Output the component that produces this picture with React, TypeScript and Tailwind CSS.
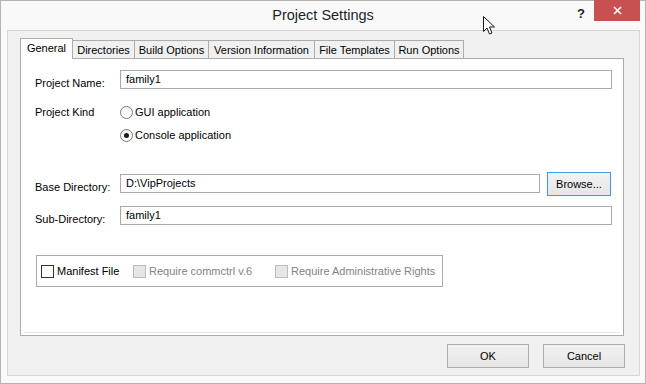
import React from 'react';

type Tab = { label: string; w: string };

const tabs: Tab[] = [
  { label: 'General', w: 'w-[53px]' },
  { label: 'Directories', w: 'w-[63px]' },
  { label: 'Build Options', w: 'w-[75px]' },
  { label: 'Version Information', w: 'w-[107px]' },
  { label: 'File Templates', w: 'w-[81px]' },
  { label: 'Run Options', w: 'w-[70px]' },
];

const Radio = ({ checked, label }: { checked?: boolean; label: string }) => (
  <div className="flex h-[23px] items-center">
    <span className="flex h-[13px] w-[13px] items-center justify-center rounded-full border border-[#7a7a7a] bg-gradient-to-b from-[#f4f4f4] to-white">
      {checked && <span className="h-[5px] w-[5px] rounded-full bg-[#1a1a1a]" />}
    </span>
    <span className="ml-[2px]">{label}</span>
  </div>
);

const Check = ({ label, disabled, w }: { label: string; disabled?: boolean; w: string }) => (
  <div className={`flex shrink-0 items-center whitespace-nowrap ${w}`}>
    <span
      className={`h-[13px] w-[13px] shrink-0 border ${
        disabled ? 'border-[#bcbcbc] bg-[#e6e6e6]' : 'border-[#333333] bg-white'
      }`}
    />
    <span className={`ml-[3px] ${disabled ? 'text-[#838383]' : ''}`}>{label}</span>
  </div>
);

const Button = ({ children, focused, w }: { children: React.ReactNode; focused?: boolean; w: string }) => (
  <button
    className={`flex h-[24px] ${w} items-center justify-center border bg-gradient-to-b from-[#f2f2f2] to-[#e5e5e5] text-[11px] text-black ${
      focused ? 'border-[#3c9be8]' : 'border-[#acacac]'
    }`}
  >
    {children}
  </button>
);

export default function App() {
  return (
    <div className="relative h-[384px] w-[646px] border border-[#b4b4b4] bg-[#f9f9f9] font-['Liberation_Sans',Arial,sans-serif] text-[11px] text-black">
      {/* title bar */}
      <div className="flex h-[29px] items-center justify-center">
        <span className="text-[14.5px] text-[#1e1e1e]">Project Settings</span>
      </div>
      <span className="absolute left-[576px] top-[3px] text-[13px] font-bold text-[#222]">?</span>
      <div className="absolute left-[593px] top-[-1px] flex h-[21px] w-[46px] items-center justify-center bg-[#c75050]">
        <svg width="9" height="9" viewBox="0 0 9 9">
          <path d="M1 1 L8 8 M8 1 L1 8" stroke="white" strokeWidth="1.6" />
        </svg>
      </div>
      {/* mouse pointer */}
      <svg className="absolute left-[481px] top-[14px]" width="14" height="21" viewBox="0 0 14 21">
        <path
          d="M1.5 1.5 L1.5 16.5 L5 13 L7.5 19 L10 18 L7.5 12 L12.5 12 Z"
          fill="white"
          stroke="#1a1a1a"
          strokeWidth="1"
          strokeLinejoin="round"
        />
      </svg>

      {/* client area */}
      <div className="ml-[6px] flex h-[346px] w-[633px] flex-col border border-[#d6d6d6] bg-[#f0f0f0] pl-[12px] pt-[7px]">
        <div className="flex h-[20px] items-end">
          {tabs.map((t, i) =>
            i === 0 ? (
              <div
                key={t.label}
                className={`relative z-10 -mb-px flex h-[21px] ${t.w} items-center justify-center border-x border-t border-[#acacac] bg-white pb-px`}
              >
                {t.label}
              </div>
            ) : (
              <div
                key={t.label}
                className={`-ml-px flex h-[18px] ${t.w} items-center justify-center border-x border-t border-[#acacac] bg-[#f0f0f0] pt-px`}
              >
                {t.label}
              </div>
            )
          )}
        </div>

        <div className="flex h-[278px] w-[604px] flex-col border border-[#acacac] bg-white pl-[14px] pt-[11px]">
          <div className="flex h-[19px]">
            <label className="w-[85px] pt-[4px] leading-[19px]">Project Name:</label>
            <div className="flex h-[19px] w-[492px] items-center border border-[#ababab] pl-[5px]">family1</div>
          </div>

          <div className="mt-[12px] flex">
            <label className="w-[85px] leading-[23px]">Project Kind</label>
            <div className="flex flex-col">
              <Radio label="GUI application" />
              <Radio label="Console application" checked />
            </div>
          </div>

          <div className="mt-[25px] flex h-[24px]">
            <label className="mt-[2px] w-[85px] pt-[4px] leading-[19px]">Base Directory:</label>
            <div className="mt-[2px] flex h-[19px] w-[420px] items-center border border-[#ababab] pl-[5px]">
              D:\VipProjects
            </div>
            <div className="ml-[7px]">
              <Button w="w-[64px]" focused>
                Browse...
              </Button>
            </div>
          </div>

          <div className="mt-[10px] flex h-[19px]">
            <label className="w-[85px] pt-[4px] leading-[19px]">Sub-Directory:</label>
            <div className="flex h-[19px] w-[492px] items-center border border-[#ababab] pl-[5px]">family1</div>
          </div>

          <div className="ml-px mt-[30px] flex h-[32px] w-[407px] items-center border border-[#ababab] pl-[4px]">
            <Check label="Manifest File" w="w-[92px]" />
            <Check label="Require commctrl v.6" w="w-[142px]" disabled />
            <Check label="Require Administrative Rights" w="w-auto" disabled />
          </div>

          <div className="mb-[2px] -ml-[11px] mr-[3px] mt-auto border-t border-[#e6e6e6]" />
        </div>

        <div className="mt-[8px] flex w-[605px] justify-end gap-[14px]">
          <Button w="w-[82px]">OK</Button>
          <Button w="w-[82px]">Cancel</Button>
        </div>
      </div>
    </div>
  );
}
